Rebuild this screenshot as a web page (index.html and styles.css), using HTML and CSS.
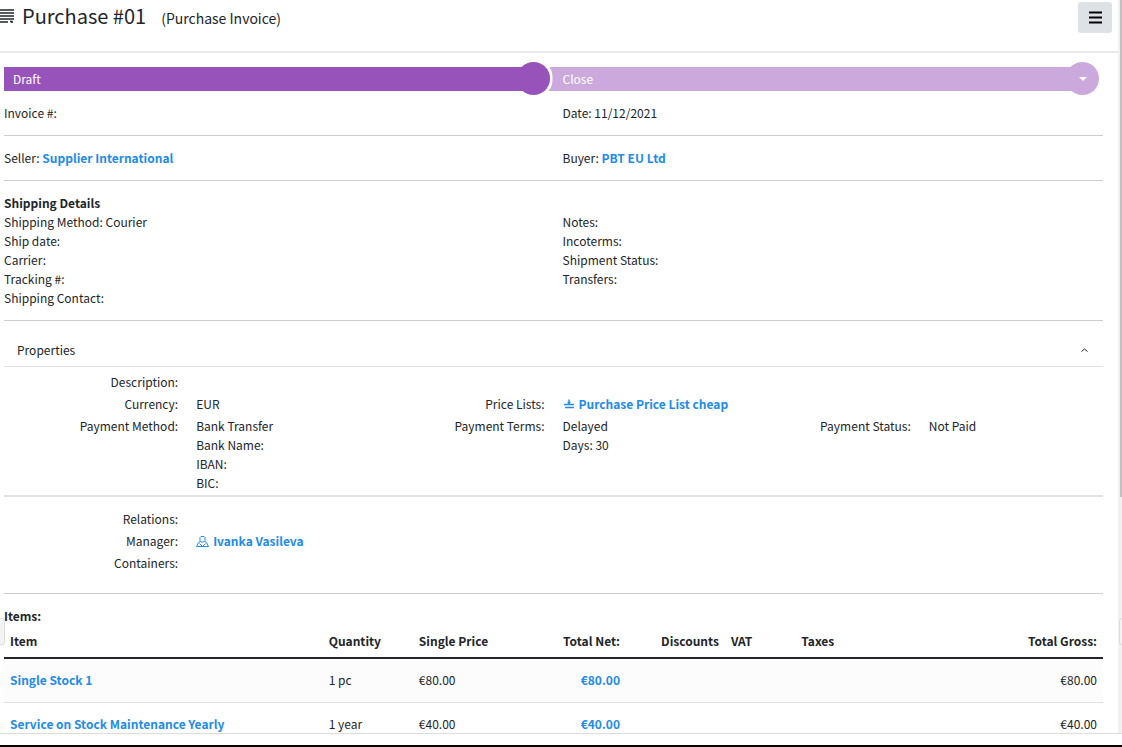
FILE: index.html
```
<!DOCTYPE html>
<html lang="en">
<head>
    <meta charset="UTF-8">
    <meta name="viewport" content="width=device-width, initial-scale=1.0">
    <title>Purchase #01</title>
    <link rel="stylesheet" href="styles.css">
</head>
<body>

    <div class="window">
        <div class="page">
            <header class="page-header">
                <svg class="title-icon" viewBox="0 0 14 14" aria-hidden="true">
                    <path d="M0 1h14M0 4h14M0 7h14M0 10h14M0 13h8M10 12.500h2v1.500" fill="none" stroke="currentColor" stroke-width="1.6"/>
                </svg>
                <h1>Purchase #01</h1>
                <span class="subtitle">(Purchase Invoice)</span>
                <button class="menu-button" type="button" aria-label="Menu">
                    <svg viewBox="0 0 13 13" aria-hidden="true">
                        <path d="M0 1.5h13M0 6.5h13M0 11.5h13" fill="none" stroke="currentColor" stroke-width="2"/>
                    </svg>
                </button>
            </header>

            <main class="content">
                <!-- Status -->
                <div class="steps">
                    <div class="step step-active">Draft</div>
                    <button class="step step-next" type="button">Close</button>
                </div>

                <section class="section two-columns">
                    <div>Invoice #:</div>
                    <div>Date: 11/12/2021</div>
                </section>

                <section class="section two-columns">
                    <div>Seller: <a href="#">Supplier International</a></div>
                    <div>Buyer: <a href="#">PBT EU Ltd</a></div>
                </section>

                <!-- Shipping -->
                <section class="section">
                    <h2>Shipping Details</h2>
                    <div class="two-columns">
                        <div>
                            <div>Shipping Method: Courier</div>
                            <div>Ship date:</div>
                            <div>Carrier:</div>
                            <div>Tracking #:</div>
                            <div>Shipping Contact:</div>
                        </div>
                        <div>
                            <div>Notes:</div>
                            <div>Incoterms:</div>
                            <div>Shipment Status:</div>
                            <div>Transfers:</div>
                        </div>
                    </div>
                </section>

                <!-- Properties -->
                <button class="panel-toggle" type="button" aria-expanded="true">
                    <span>Properties</span>
                    <svg viewBox="0 0 7 4" aria-hidden="true">
                        <path d="M.5 3.5l3-2.5 3 2.5" fill="none" stroke="currentColor"/>
                    </svg>
                </button>
                <section class="properties">
                    <div class="property-row">
                        <div class="label">Description:</div>
                    </div>
                    <div class="property-row">
                        <div class="label">Currency:</div>
                        <div>EUR</div>
                        <div class="label">Price Lists:</div>
                        <div class="wide">
                            <a class="icon-link" href="#">
                                <svg class="price-icon" viewBox="0 0 12 12" aria-hidden="true">
                                    <path d="M1 6.5h10M2 9.5h9M6 1.500V6M4.500 4.500h3" fill="none" stroke="currentColor" stroke-width="1.4"/>
                                </svg>
                                Purchase Price List cheap
                            </a>
                        </div>
                    </div>
                    <div class="property-row">
                        <div class="label">Payment Method:</div>
                        <div>
                            <div>Bank Transfer</div>
                            <div>Bank Name:</div>
                            <div>IBAN:</div>
                            <div>BIC:</div>
                        </div>
                        <div class="label">Payment Terms:</div>
                        <div>
                            <div>Delayed</div>
                            <div>Days: 30</div>
                        </div>
                        <div class="label">Payment Status:</div>
                        <div>Not Paid</div>
                    </div>
                </section>

                <section class="relations">
                    <div class="property-row">
                        <div class="label">Relations:</div>
                    </div>
                    <div class="property-row">
                        <div class="label">Manager:</div>
                        <div class="wide">
                            <a class="icon-link" href="#">
                                <svg class="user-icon" viewBox="0 0 13 12" aria-hidden="true">
                                    <path d="M5 1.500h3l1 1v3l-1 1.500H5L4 5.500v-3zM4 6.500L2.500 7.500.5 11.500h12l-2-4L9 6.500M3.500 8.500l3 3 3-3" fill="none" stroke="currentColor"/>
                                </svg>
                                Ivanka Vasileva
                            </a>
                        </div>
                    </div>
                    <div class="property-row">
                        <div class="label">Containers:</div>
                    </div>
                </section>

                <!-- Items -->
                <section class="items">
                    <h2>Items:</h2>
                    <table>
                        <thead>
                            <tr>
                                <th class="col-item">Item</th>
                                <th class="col-quantity">Quantity</th>
                                <th class="col-price">Single Price</th>
                                <th class="col-net number">Total Net:</th>
                                <th class="col-discounts number">Discounts</th>
                                <th class="col-vat">VAT</th>
                                <th class="col-taxes">Taxes</th>
                                <th class="number">Total Gross:</th>
                            </tr>
                        </thead>
                        <tbody>
                            <tr>
                                <td><a href="#">Single Stock 1</a></td>
                                <td>1 pc</td>
                                <td>€80.00</td>
                                <td class="number"><a href="#">€80.00</a></td>
                                <td></td>
                                <td></td>
                                <td></td>
                                <td class="number">€80.00</td>
                            </tr>
                            <tr>
                                <td><a href="#">Service on Stock Maintenance Yearly</a></td>
                                <td>1 year</td>
                                <td>€40.00</td>
                                <td class="number"><a href="#">€40.00</a></td>
                                <td></td>
                                <td></td>
                                <td></td>
                                <td class="number">€40.00</td>
                            </tr>
                        </tbody>
                    </table>
                </section>
            </main>
        </div>
        <div class="scrollbar"><div class="scrollbar-thumb"></div></div>
        <div class="edge-tab edge-tab-left"></div>
        <div class="edge-tab edge-tab-right"></div>
    </div>
    <footer class="bottom-bar"></footer>

</body>
</html>
```
FILE: styles.css
```
:root {
    --color-text: #212529;
    --color-link: #228be6;
    --color-purple: #9853bb;
    --color-purple-light: #cba9dd;
    --color-line: #cccccc;
    --color-line-light: #e2e2e2;
}

* {
    box-sizing: border-box;
}

body {
    margin: 0;
    height: 100vh;
    display: flex;
    flex-direction: column;
    overflow: hidden;
    background: #ffffff;
    color: var(--color-text);
    font-family: "Noto Sans CJK SC", "Open Sans", sans-serif;
    font-size: 12px;
    line-height: 19px;
}

h1, h2 {
    margin: 0;
}

h2 {
    font-size: 12px;
    font-weight: 700;
}

a {
    color: var(--color-link);
    font-weight: 700;
    text-decoration: none;
}

button {
    border: 0;
    font: inherit;
    color: inherit;
    text-align: left;
    cursor: pointer;
}

.window {
    position: relative;
    display: flex;
    flex: 1;
    min-height: 0;
    border-bottom: 1px solid #dddddd;
}

.page {
    flex: 1;
    min-width: 0;
    overflow: hidden;
}

/* Header */
.page-header {
    display: flex;
    align-items: flex-start;
    height: 53px;
    padding: 2px 6px 0 0;
    border-bottom: 2px solid #eaeaea;
}

.title-icon {
    width: 14px;
    height: 14px;
    margin-top: 7px;
}

h1 {
    margin-left: 8px;
    font-size: 20px;
    font-weight: 400;
    line-height: 28px;
}

.subtitle {
    margin-left: 15px;
    font-size: 14px;
    line-height: 32px;
}

.menu-button {
    display: flex;
    align-items: center;
    justify-content: center;
    width: 34px;
    height: 31px;
    margin-left: auto;
    padding: 0;
    border-radius: 3px;
    background: #dee2e6;
    color: #000000;
}

.menu-button svg {
    width: 13px;
    height: 13px;
}

.content {
    padding: 14px 15px 0 4px;
}

/* Status steps */
.steps {
    display: grid;
    grid-template-columns: 1fr 1fr;
    color: #ffffff;
}

.step {
    position: relative;
    height: 24px;
    margin-right: 20px;
    padding: 0 9px;
    line-height: 24px;
}

.step::after {
    content: "";
    position: absolute;
    top: -5px;
    right: -16px;
    width: 33px;
    height: 33px;
    border-radius: 50%;
    background: inherit;
}

.step-active {
    z-index: 1;
    background: var(--color-purple);
}

.step-active::before {
    content: "";
    position: absolute;
    top: -5px;
    right: -16px;
    width: 33px;
    height: 33px;
    border-radius: 50%;
    box-shadow: 0 0 0 3px #ffffff;
    clip-path: inset(-3px -3px -3px 24px);
}

.step-next {
    margin-left: -8px;
    padding-left: 17px;
    background: var(--color-purple-light);
    color: #ffffff;
}

.step-next::before {
    content: "";
    position: absolute;
    z-index: 1;
    top: 10px;
    right: -4px;
    border: 4px solid transparent;
    border-top-color: #ffffff;
    border-bottom: 0;
}

/* Details */
.section {
    padding: 12px 0 13px;
    border-bottom: 1px solid var(--color-line);
}

.two-columns {
    display: grid;
    grid-template-columns: 1fr 1fr;
}

.two-columns > :last-child {
    padding-left: 9px;
}

.panel-toggle {
    display: flex;
    align-items: center;
    justify-content: space-between;
    width: 100%;
    padding: 19px 15px 7px 13px;
    border-bottom: 1px solid var(--color-line-light);
    background: none;
}

.panel-toggle svg {
    width: 7px;
    height: 4px;
}

.properties,
.relations {
    display: flex;
    flex-direction: column;
    gap: 3px;
}

.properties {
    padding: 5px 0 3px;
    border-bottom: 2px solid var(--color-line-light);
}

.relations {
    padding: 12px 0 21px;
    border-bottom: 1px solid var(--color-line);
}

.property-row {
    display: grid;
    grid-template-columns: repeat(6, 1fr);
}

.property-row > div {
    padding: 0 9px;
}

.property-row > .label {
    text-align: right;
}

.property-row > .wide {
    grid-column: span 3;
}

.icon-link {
    display: flex;
    align-items: center;
    gap: 4px;
    width: fit-content;
}

.price-icon {
    width: 12px;
    height: 12px;
}

.user-icon {
    width: 13px;
    height: 12px;
}

/* Items */
.items {
    padding-top: 12px;
}

table {
    width: 100%;
    table-layout: fixed;
    border-collapse: separate;
    border-spacing: 0;
}

th, td {
    padding: 11px 6px 13px;
    border-bottom: 1px solid #dee2e6;
    text-align: left;
}

th {
    padding: 6px 6px 7px;
    border-bottom: 2px solid var(--color-text);
}

tbody tr:nth-child(odd) {
    background: #fcfcfc;
}

th.number,
td.number {
    text-align: right;
}

.col-item { width: 29%; }
.col-quantity { width: 8.2%; }
.col-price { width: 10%; }
.col-net { width: 9.4%; }
.col-discounts { width: 9%; }
.col-vat { width: 6.4%; }
.col-taxes { width: 14%; }

/* Window edges */
.scrollbar {
    width: 4px;
    padding-left: 2px;
    background: #f1f1f1;
}

.scrollbar-thumb {
    height: 67.8%;
    background: #c1c1c1;
}

.edge-tab {
    position: absolute;
    top: 618px;
    width: 5px;
    height: 27px;
    border: 1px solid #dddddd;
    background: #f3f3f3;
}

.edge-tab-left {
    left: 0;
    border-left: 0;
    border-radius: 0 3px 3px 0;
}

.edge-tab-right {
    right: 0;
    width: 3px;
    border-right: 0;
    border-radius: 3px 0 0 3px;
}

.bottom-bar {
    height: 13px;
    border-bottom: 2px solid #000000;
}
```
